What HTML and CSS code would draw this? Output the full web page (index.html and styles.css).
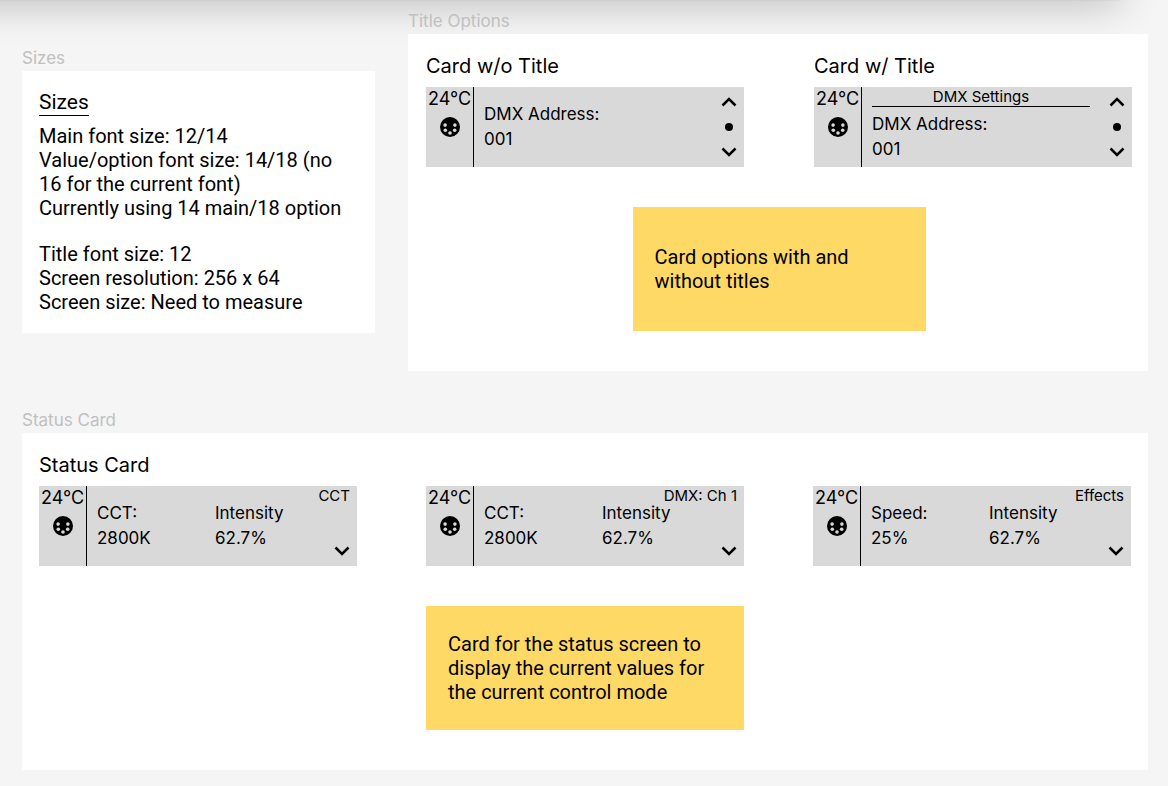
FILE: index.html
```html
<!DOCTYPE html>
<html lang="en">
<head>
<meta charset="utf-8">
<title>Fixture display cards</title>
<link rel="stylesheet" href="styles.css">
</head>
<body>
<svg class="defs" aria-hidden="true">
  <symbol id="din" viewBox="0 0 20 20">
    <circle cx="10" cy="10" r="10"/>
    <g fill="#d9d9d9"><circle cx="5.1" cy="8.1" r="1.8"/><circle cx="14.9" cy="8.1" r="1.8"/><circle cx="5.3" cy="13.2" r="1.8"/><circle cx="14.7" cy="13.2" r="1.8"/><circle cx="10" cy="16" r="1.8"/></g>
  </symbol>
  <symbol id="up" viewBox="0 0 16 12"><path d="M1.500 9.500 8 3l6.500 6.500" fill="none" stroke="#000" stroke-width="2.5"/></symbol>
  <symbol id="down" viewBox="0 0 16 12"><path d="M1.500 2.500 8 9l6.500-6.500" fill="none" stroke="#000" stroke-width="2.5"/></symbol>
</svg>
<div class="edge-shadow"></div>
<main class="canvas">
  <section class="group group-sizes">
    <h2 class="frame-name">Sizes</h2>
    <div class="frame notes">
      <h3 class="notes-title">Sizes</h3>
      <p class="copy">Main font size: 12/14<br>Value/option font size: 14/18 (no 16 for the current font)<br>Currently using 14 main/18 option</p>
      <p class="copy">Title font size: 12<br>Screen resolution: 256 x 64<br>Screen size: Need to measure</p>
    </div>
  </section>

  <section class="group">
    <h2 class="frame-name">Title Options</h2>
    <div class="frame board board-titles">
      <div class="row">
        <div class="example">
          <h3 class="heading">Card w/o Title</h3>
          <div class="screen">
            <div class="side"><span>24°C</span><svg class="din"><use href="#din"/></svg></div>
            <div class="body"><div class="fields"><div>DMX Address:<br>001</div></div></div>
            <div class="nav">
              <button class="arrow" aria-label="Previous"><svg><use href="#up"/></svg></button>
              <span class="dot"></span>
              <button class="arrow" aria-label="Next"><svg><use href="#down"/></svg></button>
            </div>
          </div>
        </div>
        <div class="example">
          <h3 class="heading">Card w/ Title</h3>
          <div class="screen">
            <div class="side"><span>24°C</span><svg class="din"><use href="#din"/></svg></div>
            <div class="body titled"><div class="title">DMX Settings</div><div class="fields"><div>DMX Address:<br>001</div></div></div>
            <div class="nav">
              <button class="arrow" aria-label="Previous"><svg><use href="#up"/></svg></button>
              <span class="dot"></span>
              <button class="arrow" aria-label="Next"><svg><use href="#down"/></svg></button>
            </div>
          </div>
        </div>
      </div>
      <p class="sticky sticky-small copy">Card options with and without titles</p>
    </div>
  </section>

  <section class="group group-status">
    <h2 class="frame-name">Status Card</h2>
    <div class="frame board">
      <h3 class="heading">Status Card</h3>
      <div class="row">
        <div class="screen">
          <div class="side"><span>24°C</span><svg class="din"><use href="#din"/></svg></div>
          <div class="body"><div class="fields"><div>CCT:<br>2800K</div><div>Intensity<br>62.7%</div></div></div>
          <div class="nav"><button class="arrow" aria-label="Next"><svg><use href="#down"/></svg></button></div>
          <span class="mode">CCT</span>
        </div>
        <div class="screen">
          <div class="side"><span>24°C</span><svg class="din"><use href="#din"/></svg></div>
          <div class="body"><div class="fields"><div>CCT:<br>2800K</div><div>Intensity<br>62.7%</div></div></div>
          <div class="nav"><button class="arrow" aria-label="Next"><svg><use href="#down"/></svg></button></div>
          <span class="mode">DMX: Ch 1</span>
        </div>
        <div class="screen">
          <div class="side"><span>24°C</span><svg class="din"><use href="#din"/></svg></div>
          <div class="body"><div class="fields"><div>Speed:<br>25%</div><div>Intensity<br>62.7%</div></div></div>
          <div class="nav"><button class="arrow" aria-label="Next"><svg><use href="#down"/></svg></button></div>
          <span class="mode">Effects</span>
        </div>
      </div>
      <p class="sticky copy">Card for the status screen to display the current values for the current control mode</p>
    </div>
  </section>
</main>
</body>
</html>
```
FILE: styles.css
```css
* { box-sizing: border-box; }

body {
  margin: 0;
  background: #f5f5f5;
  color: #000;
  font-family: Inter, sans-serif;
  overflow-x: hidden;
}

h2, h3, p { margin: 0; font-weight: 400; }

.defs { position: absolute; width: 0; height: 0; }

/* Shadow cast by the panel above the canvas */
.edge-shadow {
  position: absolute;
  top: -40px;
  left: -60px;
  right: 48px;
  height: 40px;
  box-shadow: 0 0 2px rgba(0, 0, 0, .08), 0 4px 40px rgba(0, 0, 0, .24);
}

.canvas {
  position: relative;
  display: grid;
  grid-template-columns: 353fr 740fr;
  column-gap: 33px;
  row-gap: 38px;
  align-items: start;
  padding: 10px 20px 16px 22px;
}

.group-sizes { padding-top: 37px; }
.group-status { grid-column: 1 / -1; }

.frame-name {
  height: 24px;
  font-size: 17px;
  line-height: 23px;
  color: #c0c0c0;
}

.frame { background: #fff; }

.notes { padding: 19px 17px; }

.notes-title {
  width: max-content;
  margin-bottom: 8px;
  border-bottom: 1px solid #000;
  font: 21px/25px Roboto, sans-serif;
}

.copy { font: 20px/24px Roboto, sans-serif; }
.copy + .copy { margin-top: 22px; }

.board {
  display: flex;
  flex-direction: column;
  padding: 18px 17px 40px;
}

.board-titles { padding-left: 18px; padding-right: 16px; }

.row { display: flex; justify-content: space-between; gap: 20px; }
.example, .row > .screen { flex: 0 1 318px; }

.heading {
  margin-bottom: 7px;
  font-size: 20px;
  line-height: 28px;
}

.screen {
  position: relative;
  display: flex;
  min-height: 80px;
  background: #d9d9d9;
  font-size: 17px;
  line-height: 25px;
}

.side {
  display: flex;
  flex-direction: column;
  align-items: center;
  gap: 6px;
  width: 48px;
  border-right: 1px solid #000;
  font-size: 18px;
  line-height: 24px;
}

.din { display: block; width: 20px; height: 20px; }

.body {
  flex: 1;
  display: flex;
  flex-direction: column;
  justify-content: center;
  padding-left: 10px;
}

.titled { justify-content: flex-start; gap: 5px; }

.title {
  border-bottom: 1px solid #000;
  font-size: 15px;
  line-height: 19px;
  text-align: center;
}

.fields { display: grid; grid-template-columns: 118px 1fr; white-space: nowrap; }

.nav {
  display: flex;
  flex-direction: column;
  justify-content: space-between;
  align-items: center;
  width: 42px;
  padding: 9px 7px 9px 19px;
}

.row > .screen .nav { justify-content: flex-end; }

.arrow { padding: 0; border: 0; background: none; cursor: pointer; }
.arrow svg { display: block; width: 16px; height: 12px; }

.dot { width: 8px; height: 8px; border-radius: 50%; background: #000; }

.mode {
  position: absolute;
  top: 0;
  right: 7px;
  font-size: 15px;
  line-height: 19px;
}

.sticky {
  display: flex;
  align-items: center;
  align-self: center;
  width: 318px;
  min-height: 124px;
  margin-top: 40px;
  padding: 0 22px;
  background: #ffd966;
}

.sticky-small { width: 293px; padding-right: 50px; }
```
